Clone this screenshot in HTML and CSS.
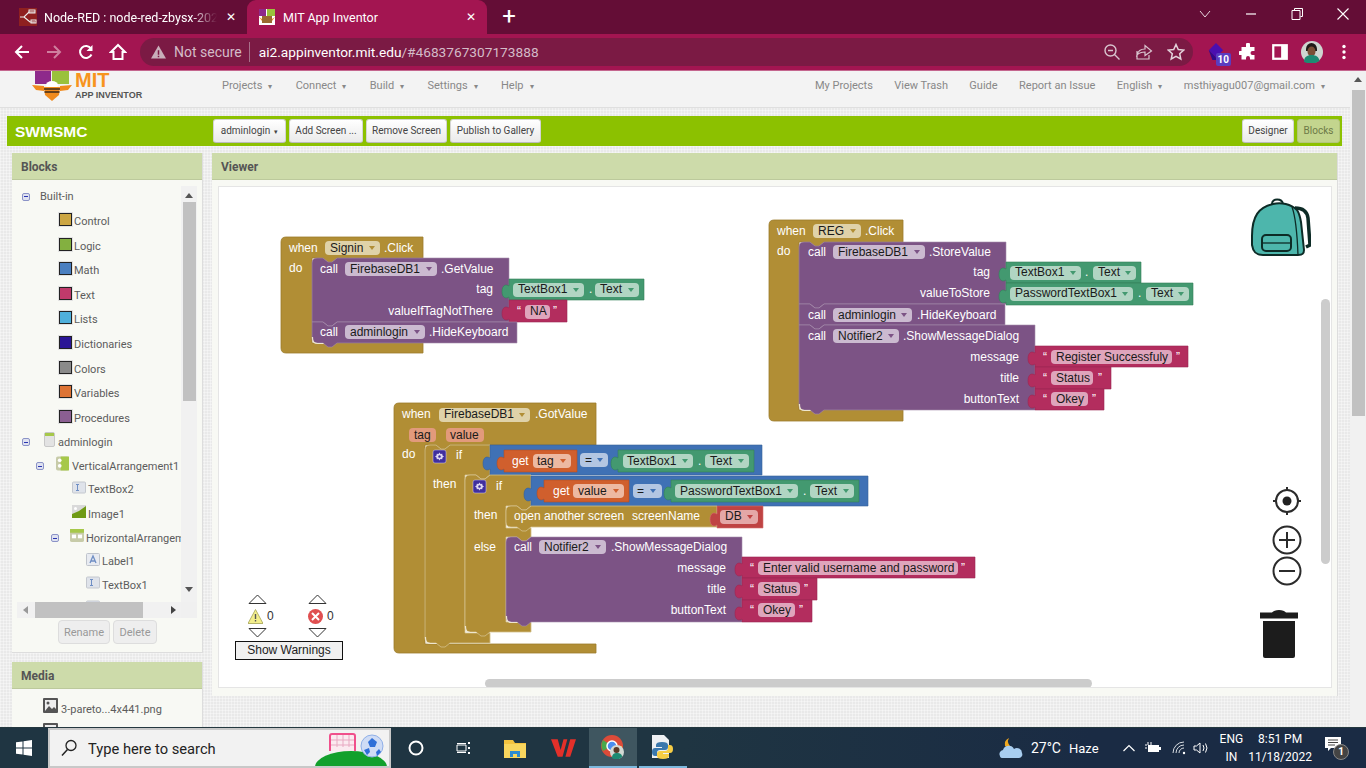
FILE: index.html
```html
<!DOCTYPE html>
<html lang="en">
<head>
<meta charset="utf-8">
<title>MIT App Inventor</title>
<link rel="stylesheet" href="styles.css">
</head>
<body>
<div class="tabstrip">
  <div class="tab inactive">
    <svg class="fav" viewBox="0 0 18 18"><rect width="18" height="18" fill="#8f2020"/><path d="M1 9h4l5-5h6M5 9l6 5h5" fill="none" stroke="#eee" stroke-width="1.2"/><rect x="10" y="2" width="6" height="3" fill="none" stroke="#eee"/><rect x="12" y="12" width="5" height="3" fill="none" stroke="#eee"/></svg>
    <span class="tabtitle fade">Node-RED : node-red-zbysx-2022</span>
    <span class="tabx">✕</span>
  </div>
  <div class="tab active">
    <svg class="fav" viewBox="0 0 16 16"><rect width="16" height="16" fill="#fff"/><rect width="7" height="7" fill="#8e2a8b"/><rect x="8" width="8" height="7" fill="#9ac13c"/><rect x="3" y="7" width="10" height="7" fill="#9a6a30"/><path d="M0 8l3 2v2zM16 8l-3 2v2z" fill="#f08a1d"/></svg>
    <span class="tabtitle">MIT App Inventor</span>
    <span class="tabx">✕</span>
  </div>
  <span class="newtab">+</span>
  <div class="winctl">
    <svg viewBox="0 0 14 14"><path d="M2 4l5 6 5-6" fill="none" stroke="#e8d5de"/></svg>
    <svg viewBox="0 0 14 14"><path d="M2 7h10" stroke="#fff" stroke-width="1.2"/></svg>
    <svg viewBox="0 0 14 14"><path d="M4.500 3V1.500h8v8H10.500M2 3.500h8v9H2z" fill="none" stroke="#fff"/></svg>
    <svg viewBox="0 0 14 14"><path d="M1.500 1.500l11 11M12.500 1.500l-11 11" stroke="#fff" stroke-width="1.1"/></svg>
  </div>
</div>
<div class="toolbar">
  <span class="tbtn"><svg viewBox="0 0 18 18"><path d="M16 9H3M9 3L3 9l6 6" fill="none" stroke="#fff" stroke-width="2"/></svg></span>
  <span class="tbtn"><svg viewBox="0 0 18 18"><path d="M2 9h13M9 3l6 6-6 6" fill="none" stroke="#cf7f9f" stroke-width="2"/></svg></span>
  <span class="tbtn"><svg viewBox="0 0 18 18"><path d="M14.500 11.500A6 6 0 1 1 14 5.500" fill="none" stroke="#fff" stroke-width="2"/><path d="M15.500 2v6h-6z" fill="#fff"/></svg></span>
  <span class="tbtn"><svg viewBox="0 0 18 18"><path d="M9 2L2 9h2.500v7h9V9H16z" fill="none" stroke="#fff" stroke-width="2"/></svg></span>
  <div class="omni">
    <svg class="warnicon" viewBox="0 0 16 14"><path d="M8 0l8 14H0z" fill="#c9aeba"/><path d="M7.200 5h1.600v5H7.200zM7.200 11h1.600v1.600H7.200z" fill="#7b1a44"/></svg>
    <span class="notsecure">Not secure</span>
    <span class="omnisep"></span>
    <span class="url">ai2.appinventor.mit.edu<span class="urldim">/#4683767307173888</span></span>
    <span class="omniicons">
      <svg viewBox="0 0 18 18"><circle cx="7.500" cy="7.500" r="5.500" fill="none" stroke="#d8c4ce" stroke-width="1.400"/><path d="M11.500 11.500l5 5M5 7.500h5" stroke="#d8c4ce" stroke-width="1.400"/></svg>
      <svg viewBox="0 0 18 18"><path d="M2 8v8h12v-4M2 12c1-4 4-6 8-6V2.500L16.500 8 10 12.500V9c-3 0-6 1-8 3z" fill="none" stroke="#d8c4ce" stroke-width="1.200"/></svg>
      <svg viewBox="0 0 18 18"><path d="M9 1.500l2.300 5 5.400.6-4 3.600 1.100 5.300L9 13.300 4.200 16l1.100-5.300-4-3.600 5.400-.6z" fill="none" stroke="#e3d2da" stroke-width="1.500"/></svg>
    </span>
  </div>
  <span class="tbtn ext"><svg viewBox="0 0 20 20"><path d="M10 0l8 8-8 8-8-8z" fill="#4a0fb0"/><path d="M2 8l8 8v3H6z" fill="#2f0a8a"/></svg><span class="badge">10</span></span>
  <span class="tbtn"><svg viewBox="0 0 18 18"><path d="M7 1.500a2 2 0 0 1 4 0V4h4.500v4h-2a2 2 0 0 0 0 4h2v4.500H11v-1.500a2 2 0 0 0-4 0v1.500H2.500V12H1a2 2 0 0 1 0-4h1.500V4H7z" fill="#fff"/></svg></span>
  <span class="tbtn"><svg viewBox="0 0 16 16"><path d="M1 1h14v14H1z" fill="#fff"/><path d="M3 3h6v10H3z" fill="#a31551"/></svg></span>
  <span class="tbtn"><svg class="avatar" viewBox="0 0 22 22"><circle cx="11" cy="11" r="11" fill="#cfd5d0"/><path d="M5 8a5.500 6 0 0 1 11 0v2H5z" fill="#1f1a18"/><ellipse cx="10.500" cy="10.500" rx="4" ry="5" fill="#7a4f35"/><path d="M3 21c0-5 3-7 7.500-7s7.500 2 8 6l-4 2H6z" fill="#1d8a72"/></svg></span>
  <span class="tbtn"><svg viewBox="0 0 18 18"><circle cx="9" cy="3.500" r="1.700" fill="#fff"/><circle cx="9" cy="9" r="1.700" fill="#fff"/><circle cx="9" cy="14.500" r="1.700" fill="#fff"/></svg></span>
</div>
<div class="page">
  <div class="app">
    <header class="topbar">
      <div class="logo">
        <svg class="bee" viewBox="0 0 40 30"><rect x="3" y="0" width="16" height="13" fill="#8e2a8b"/><rect x="20" y="0" width="17" height="13" fill="#9ac13c"/><ellipse cx="20" cy="14" rx="6" ry="4" fill="#fff"/><path d="M0 14l12 1v5l-8-1zM40 14l-12 1v5l8-1z" fill="#f08a1d"/><path d="M12 16h16l-1 8-7 6-7-6z" fill="#f08a1d"/><path d="M12 18h16M12.500 21h15" stroke="#3b2a1a" stroke-width="1.600"/></svg>
        <div class="logotext"><span class="mit">MIT</span><span class="appinv">APP INVENTOR</span></div>
      </div>
      <nav class="menu left">
        <span>Projects<i>▾</i></span><span>Connect<i>▾</i></span><span>Build<i>▾</i></span><span>Settings<i>▾</i></span><span>Help<i>▾</i></span>
      </nav>
      <nav class="menu right">
        <span>My Projects</span><span>View Trash</span><span>Guide</span><span>Report an Issue</span><span>English<i>▾</i></span><span>msthiyagu007@gmail.com<i>▾</i></span>
      </nav>
    </header>
    <div class="greenbar">
      <span class="projname">SWMSMC</span>
      <div class="gbtns">
        <button class="gbtn w1">adminlogin<i>▾</i></button>
        <button class="gbtn w2">Add Screen ...</button>
        <button class="gbtn w3">Remove Screen</button>
        <button class="gbtn w4">Publish to Gallery</button>
      </div>
      <div class="gbtns end">
        <button class="gbtn w5">Designer</button>
        <button class="gbtn w6 on">Blocks</button>
      </div>
    </div>
    <div class="content">
      <aside class="sidecol">
        <section class="panel blockspanel">
          <h2 class="ptitle">Blocks</h2>
          <div class="treewrap">
            <div class="tree">
              <div class="row r0 first"><span class="tog"></span><span class="rlabel builtin">Built-in</span></div>
              <div class="row cat"><span class="sw c1"></span>Control</div>
              <div class="row cat"><span class="sw c2"></span>Logic</div>
              <div class="row cat"><span class="sw c3"></span>Math</div>
              <div class="row cat"><span class="sw c4"></span>Text</div>
              <div class="row cat"><span class="sw c5"></span>Lists</div>
              <div class="row cat"><span class="sw c6"></span>Dictionaries</div>
              <div class="row cat"><span class="sw c7"></span>Colors</div>
              <div class="row cat"><span class="sw c8"></span>Variables</div>
              <div class="row cat"><span class="sw c9"></span>Procedures</div>
              <div class="row comp r0"><span class="tog"></span><svg class="cico screen" viewBox="0 0 11 15"><rect x=".5" y=".5" width="10" height="14" rx="1.500" fill="#e3e3e3" stroke="#c8c8c8"/><rect x="1" y="1" width="9" height="3" fill="#a6c84a"/></svg>adminlogin</div>
              <div class="row comp l1"><span class="tog"></span><svg class="cico" viewBox="0 0 14 15"><rect width="14" height="15" rx="2" fill="#c7cba8"/><rect x="5" width="9" height="15" fill="#a6c84a"/><circle cx="4" cy="4" r="2" fill="#fff"/><circle cx="4" cy="10" r="2" fill="#fff"/></svg>VerticalArrangement1</div>
              <div class="row comp l2"><svg class="cico wide" viewBox="0 0 14 12"><rect x=".5" y=".5" width="13" height="11" rx="1" fill="#dfe3ea" stroke="#c4c8cf"/><path d="M4 3h3M5.500 3v6M4 9h3" stroke="#6f8fc4"/></svg>TextBox2</div>
              <div class="row comp l2"><svg class="cico wide" viewBox="0 0 14 13"><rect width="14" height="13" fill="#d9d9d9"/><path d="M0 13V9l7-3 7-5v12z" fill="#6f9a14"/><circle cx="3.500" cy="3.500" r="1.500" fill="#fff"/></svg>Image1</div>
              <div class="row comp l3"><span class="tog"></span><svg class="cico wide" viewBox="0 0 15 14"><rect width="15" height="14" rx="2" fill="#c7cba8"/><rect width="15" height="4" fill="#a6c84a"/><rect x="2" y="6" width="4.500" height="4" fill="#fff"/><rect x="8.500" y="6" width="4.500" height="4" fill="#fff"/></svg>HorizontalArrangement1</div>
              <div class="row comp l4"><svg class="cico wide" viewBox="0 0 14 13"><rect x=".5" y=".5" width="13" height="12" rx="1" fill="#e8ebf1" stroke="#bfc4cc"/><path d="M4 10l3-7 3 7M5 8h4" fill="none" stroke="#6f8fc4" stroke-width="1.300"/></svg>Label1</div>
              <div class="row comp l4"><svg class="cico wide" viewBox="0 0 14 12"><rect x=".5" y=".5" width="13" height="11" rx="1" fill="#dfe3ea" stroke="#c4c8cf"/><path d="M4 3h3M5.500 3v6M4 9h3" stroke="#6f8fc4"/></svg>TextBox1</div>
              <div class="row comp l4"><svg class="cico wide" viewBox="0 0 14 12"><rect x=".5" y=".5" width="13" height="11" rx="1" fill="#dfe3ea" stroke="#c4c8cf"/></svg></div>
            </div>
            <div class="vscroll"><span class="arr up"></span><span class="vthumb"></span><span class="arr down"></span></div>
            <div class="hscroll"><span class="arr lft"></span><span class="hthumb"></span><span class="arr rgt"></span></div>
            <div class="corner"></div>
          </div>
          <div class="treebtns"><button class="dis b1">Rename</button><button class="dis b2">Delete</button></div>
        </section>
        <section class="panel mediapanel">
          <h2 class="ptitle">Media</h2>
          <div class="mediarow"><svg class="mico" viewBox="0 0 15 15"><rect width="15" height="15" rx="1" fill="#555"/><rect x="2" y="2" width="11" height="11" fill="#eee"/><path d="M2 13l4-5 3 3 2-2 2 2v2z" fill="#555"/><circle cx="5" cy="5" r="1.500" fill="#555"/></svg>3-pareto...4x441.png</div>
          <div class="mediarow"><svg class="mico" viewBox="0 0 15 15"><rect width="15" height="15" rx="1" fill="#555"/><rect x="2" y="2" width="11" height="11" fill="#eee"/></svg></div>
        </section>
      </aside>
      <section class="panel viewer">
        <h2 class="ptitle">Viewer</h2>
        <div class="viewerbody">
          <div class="workspace">
            <svg class="blocks" viewBox="218 187 1112 500" width="1112" height="500">
              <!-- Signin click -->
              <path class="ctl" d="M286 237H423V258H337l-5 4h-4l-5-4H312V343H423V353H286Q281 353 281 348V242Q281 237 286 237z"/>
              <text class="w" x="289" y="252">when</text>
              <rect class="pc" x="325" y="241" width="55" height="14" rx="4"/><text class="k" x="330" y="252">Signin</text><path class="ac" d="M369 246h6l-3 4z"/>
              <text class="w" x="384" y="252">.Click</text>
              <text class="w" x="289" y="272">do</text>
              <path class="proc" d="M317 258h6l5 4h4l5-4H509V322H337l-5 4h-4l-5-4H312V263Q312 258 317 258z"/>
              <text class="w" x="320" y="273">call</text>
              <rect class="pp" x="345" y="262" width="92" height="14" rx="4"/><text class="k" x="350" y="273">FirebaseDB1</text><path class="ap" d="M426 267h6l-3 4z"/>
              <text class="w" x="441" y="273">.GetValue</text>
              <text class="w e" x="493" y="293">tag</text>
              <text class="w e" x="493" y="315">valueIfTagNotThere</text>
              <path class="cmp" d="M509 279H644V300H509V297c-3 2-7 1-7-5.500s4-7.500 7-5.500z"/>
              <rect class="pg" x="513" y="283" width="71" height="14" rx="4"/><text class="k" x="518" y="293">TextBox1</text><path class="ag" d="M573 288h6l-3 4z"/>
              <text class="w" x="589" y="293">.</text>
              <rect class="pg" x="595" y="283" width="44" height="14" rx="4"/><text class="k" x="600" y="293">Text</text><path class="ag" d="M628 288h6l-3 4z"/>
              <path class="txt" d="M509 300H567V322H509V319c-3 2-7 1-7-5.500s4-7.500 7-5.500z"/>
              <text class="w q" x="517" y="315">“</text><rect class="pt" x="525" y="305" width="25" height="14" rx="4"/><text class="k" x="530" y="315">NA</text><text class="w q" x="553" y="315">”</text>
              <path class="proc" d="M312 322h11l5 4h4l5-4H517V343H337l-5 4h-4l-5-4H317Q312 343 312 338z"/>
              <text class="w" x="320" y="336">call</text>
              <rect class="pp" x="345" y="325" width="80" height="14" rx="4"/><text class="k" x="350" y="336">adminlogin</text><path class="ap" d="M414 330h6l-3 4z"/>
              <text class="w" x="429" y="336">.HideKeyboard</text>
              <path class="hl" d="M312.500 337v1q0 5.500 5 5.500h6"/>

              <!-- REG click -->
              <path class="ctl" d="M774 220H903V242H824l-5 4h-4l-5-4H799V410H903V421H774Q769 421 769 416V225Q769 220 774 220z"/>
              <text class="w" x="777" y="235">when</text>
              <rect class="pc" x="813" y="224" width="48" height="14" rx="4"/><text class="k" x="818" y="235">REG</text><path class="ac" d="M850 229h6l-3 4z"/>
              <text class="w" x="865" y="235">.Click</text>
              <text class="w" x="777" y="255">do</text>
              <path class="proc" d="M804 242h6l5 4h4l5-4H1006V304H824l-5 4h-4l-5-4H799V247Q799 242 804 242z"/>
              <text class="w" x="808" y="256">call</text>
              <rect class="pp" x="833" y="245" width="92" height="14" rx="4"/><text class="k" x="838" y="256">FirebaseDB1</text><path class="ap" d="M914 250h6l-3 4z"/>
              <text class="w" x="929" y="256">.StoreValue</text>
              <text class="w e" x="990" y="276">tag</text>
              <text class="w e" x="990" y="297">valueToStore</text>
              <path class="cmp" d="M1006 262H1141V283H1006V280c-3 2-7 1-7-5.500s4-7.500 7-5.500z"/>
              <rect class="pg" x="1010" y="266" width="71" height="14" rx="4"/><text class="k" x="1015" y="276">TextBox1</text><path class="ag" d="M1070 271h6l-3 4z"/>
              <text class="w" x="1085" y="276">.</text>
              <rect class="pg" x="1093" y="266" width="43" height="14" rx="4"/><text class="k" x="1098" y="276">Text</text><path class="ag" d="M1125 271h6l-3 4z"/>
              <path class="cmp" d="M1006 283H1193V305H1006V302c-3 2-7 1-7-5.500s4-7.500 7-5.500z"/>
              <rect class="pg" x="1010" y="287" width="123" height="14" rx="4"/><text class="k" x="1015" y="297">PasswordTextBox1</text><path class="ag" d="M1122 292h6l-3 4z"/>
              <text class="w" x="1138" y="297">.</text>
              <rect class="pg" x="1146" y="287" width="43" height="14" rx="4"/><text class="k" x="1151" y="297">Text</text><path class="ag" d="M1178 292h6l-3 4z"/>
              <path class="proc" d="M799 304h11l5 4h4l5-4H1005V325H824l-5 4h-4l-5-4H799z"/>
              <text class="w" x="808" y="319">call</text>
              <rect class="pp" x="833" y="308" width="79" height="14" rx="4"/><text class="k" x="838" y="319">adminlogin</text><path class="ap" d="M901 313h6l-3 4z"/>
              <text class="w" x="917" y="319">.HideKeyboard</text>
              <path class="proc" d="M799 325h11l5 4h4l5-4H1035V410H824l-5 4h-4l-5-4H804Q799 410 799 405z"/>
              <text class="w" x="808" y="340">call</text>
              <rect class="pp" x="833" y="329" width="66" height="14" rx="4"/><text class="k" x="838" y="340">Notifier2</text><path class="ap" d="M888 334h6l-3 4z"/>
              <text class="w" x="903" y="340">.ShowMessageDialog</text>
              <text class="w e" x="1019" y="361">message</text>
              <text class="w e" x="1019" y="382">title</text>
              <text class="w e" x="1019" y="403">buttonText</text>
              <path class="txt" d="M1035 346H1188V367H1035V364c-3 2-7 1-7-5.500s4-7.500 7-5.500z"/>
              <text class="w q" x="1043" y="361">“</text><rect class="pt" x="1051" y="350" width="121" height="14" rx="4"/><text class="k" x="1056" y="361">Register Successfuly</text><text class="w q" x="1176" y="361">”</text>
              <path class="txt" d="M1035 367H1111V389H1035V386c-3 2-7 1-7-5.500s4-7.500 7-5.500z"/>
              <text class="w q" x="1043" y="382">“</text><rect class="pt" x="1051" y="371" width="42" height="14" rx="4"/><text class="k" x="1056" y="382">Status</text><text class="w q" x="1098" y="382">”</text>
              <path class="txt" d="M1035 389H1104V410H1035V407c-3 2-7 1-7-5.500s4-7.500 7-5.500z"/>
              <text class="w q" x="1043" y="403">“</text><rect class="pt" x="1051" y="392" width="37" height="14" rx="4"/><text class="k" x="1056" y="403">Okey</text><text class="w q" x="1092" y="403">”</text>
              <path class="hl" d="M799.500 404v1q0 5.500 5 5.500h6"/>

              <!-- GotValue -->
              <path class="ctl" d="M399 403H596V445H450l-5 4h-4l-5-4H425V644H596V653H399Q394 653 394 648V408Q394 403 399 403z"/>
              <text class="w" x="402" y="418">when</text>
              <rect class="pc" x="439" y="408" width="91" height="14" rx="4"/><text class="k" x="444" y="418">FirebaseDB1</text><path class="ac" d="M519 413h6l-3 4z"/>
              <text class="w" x="535" y="418">.GotValue</text>
              <rect class="pe" x="409" y="428" width="27" height="14" rx="4"/><text class="k" x="414" y="439">tag</text>
              <rect class="pe" x="446" y="428" width="38" height="14" rx="4"/><text class="k" x="450" y="439">value</text>
              <text class="w" x="402" y="458">do</text>
              <path class="ctl lite" d="M430 445h6l5 4h4l5-4H490V475l-5 4h-4l-5-4H465V633H490V643H450l-5 4h-4l-5-4H430Q425 643 425 638V450Q425 445 430 445z"/>
              <rect class="gearbg" x="433" y="450" width="13" height="13" rx="2"/><path class="gear" d="M439.500 452.500l1 1.500 1.700-.3.300 1.700 1.500 1.100-1.500 1.100-.3 1.700-1.700-.3-1 1.500-1-1.500-1.700.3-.3-1.700-1.500-1.100 1.500-1.100.3-1.700 1.700.3z"/><circle class="gearbg" cx="439.500" cy="456.500" r="1.500"/>
              <text class="w" x="456" y="459">if</text>
              <text class="w" x="433" y="488">then</text>
              <path class="blu" d="M490 445H762V475H490V469c-3 2-7 1-7-5.500s4-7.500 7-5.500z"/>
              <path class="var" d="M504 450H577V472H504V469c-3 2-7 1-7-5.500s4-7.500 7-5.500z"/>
              <text class="w" x="512" y="465">get</text>
              <rect class="pv" x="533" y="454" width="38" height="14" rx="4"/><text class="k" x="537" y="465">tag</text><path class="av" d="M560 459h6l-3 4z"/>
              <rect class="pb" x="580" y="453" width="28" height="14" rx="4"/><text class="k" x="585" y="464">=</text><path class="ab" d="M597 458h6l-3 4z"/>
              <path class="cmp" d="M618 450H754V472H618V469c-3 2-7 1-7-5.500s4-7.500 7-5.500z"/>
              <rect class="pg" x="623" y="454" width="70" height="14" rx="4"/><text class="k" x="627" y="465">TextBox1</text><path class="ag" d="M682 459h6l-3 4z"/>
              <text class="w" x="698" y="465">.</text>
              <rect class="pg" x="705" y="454" width="44" height="14" rx="4"/><text class="k" x="710" y="465">Text</text><path class="ag" d="M738 459h6l-3 4z"/>
              <path class="ctl lite" d="M470 475h6l5 4h4l5-4H531V506l-5 4h-4l-5-4H506V528H531V537l-5 4h-4l-5-4H506V622H531V632H490l-5 4h-4l-5-4H470Q465 632 465 627V480Q465 475 470 475z"/>
              <rect class="gearbg" x="473" y="480" width="13" height="13" rx="2"/><path class="gear" d="M479.500 482.500l1 1.500 1.700-.3.300 1.700 1.500 1.100-1.500 1.100-.3 1.700-1.700-.3-1 1.500-1-1.500-1.700.3-.3-1.700-1.500-1.100 1.500-1.100.3-1.700 1.700.3z"/><circle class="gearbg" cx="479.500" cy="486.500" r="1.500"/>
              <text class="w" x="496" y="490">if</text>
              <text class="w" x="474" y="519">then</text>
              <text class="w" x="474" y="551">else</text>
              <path class="blu" d="M531 476H868V506H531V500c-3 2-7 1-7-5.500s4-7.500 7-5.500z"/>
              <path class="var" d="M544 480H629V502H544V499c-3 2-7 1-7-5.500s4-7.500 7-5.500z"/>
              <text class="w" x="553" y="495">get</text>
              <rect class="pv" x="573" y="484" width="51" height="14" rx="4"/><text class="k" x="578" y="495">value</text><path class="av" d="M613 489h6l-3 4z"/>
              <rect class="pb" x="633" y="484" width="29" height="14" rx="4"/><text class="k" x="637" y="495">=</text><path class="ab" d="M650 489h6l-3 4z"/>
              <path class="cmp" d="M671 480H859V502H671V499c-3 2-7 1-7-5.500s4-7.500 7-5.500z"/>
              <rect class="pg" x="675" y="484" width="123" height="14" rx="4"/><text class="k" x="680" y="495">PasswordTextBox1</text><path class="ag" d="M787 489h6l-3 4z"/>
              <text class="w" x="803" y="495">.</text>
              <rect class="pg" x="810" y="484" width="44" height="14" rx="4"/><text class="k" x="815" y="495">Text</text><path class="ag" d="M843 489h6l-3 4z"/>
              <path class="ctl lite" d="M511 506h6l5 4h4l5-4H717V527H531l-5 4h-4l-5-4H511Q506 527 506 522V511Q506 506 511 506z"/>
              <text class="w" x="514" y="520">open another screen</text>
              <text class="w" x="632" y="520">screenName</text>
              <path class="hel" d="M717 506H763V528H717V525c-3 2-7 1-7-5.500s4-7.500 7-5.500z"/>
              <rect class="pd" x="720" y="510" width="38" height="14" rx="4"/><text class="k" x="725" y="520">DB</text><path class="ad" d="M747 515h6l-3 4z"/>
              <path class="proc" d="M511 537h6l5 4h4l5-4H742V622H531l-5 4h-4l-5-4H511Q506 622 506 617V542Q506 537 511 537z"/>
              <text class="w" x="514" y="551">call</text>
              <rect class="pp" x="539" y="540" width="67" height="14" rx="4"/><text class="k" x="544" y="551">Notifier2</text><path class="ap" d="M595 545h6l-3 4z"/>
              <text class="w" x="611" y="551">.ShowMessageDialog</text>
              <text class="w e" x="726" y="572">message</text>
              <text class="w e" x="726" y="593">title</text>
              <text class="w e" x="726" y="614">buttonText</text>
              <path class="txt" d="M742 557H975V578H742V575c-3 2-7 1-7-5.500s4-7.500 7-5.500z"/>
              <text class="w q" x="750" y="572">“</text><rect class="pt" x="758" y="561" width="200" height="14" rx="4"/><text class="k" x="763" y="572">Enter valid username and password</text><text class="w q" x="961" y="572">”</text>
              <path class="txt" d="M742 578H817V600H742V597c-3 2-7 1-7-5.500s4-7.500 7-5.500z"/>
              <text class="w q" x="750" y="593">“</text><rect class="pt" x="758" y="582" width="42" height="14" rx="4"/><text class="k" x="763" y="593">Status</text><text class="w q" x="804" y="593">”</text>
              <path class="txt" d="M742 600H812V622H742V619c-3 2-7 1-7-5.500s4-7.500 7-5.500z"/>
              <text class="w q" x="750" y="614">“</text><rect class="pt" x="758" y="603" width="37" height="14" rx="4"/><text class="k" x="763" y="614">Okey</text><text class="w q" x="799" y="614">”</text>
              <path class="hl" d="M506.500 616v1q0 5.500 5 5.500h6"/>
              <path class="hl" d="M465.500 626v1q0 5.500 5 5.500h6"/>
              <path class="hl" d="M425.500 637v1q0 5.500 5 5.500h6"/>
            </svg>

            <svg class="backpack" viewBox="0 0 60 60">
              <path d="M44 10c8 0 12 3 13 10l2 27-4 2" fill="#fff" stroke="#0d2b26" stroke-width="3.500"/>
              <path d="M21 6c0-6 10-6 11 0" fill="none" stroke="#0d2b26" stroke-width="2"/>
              <path d="M1 38C1 18 8 9 22 6c8-2 18 0 24 6 2 3 3 6 4 12l3 28c0 4-2 5-6 5H12C5 57 2 54 1 47z" fill="#4db6ac" stroke="#0d2b26" stroke-width="2"/>
              <path d="M41 9c3 8 5 22 6 48" fill="none" stroke="#0d2b26" stroke-width="1.300"/>
              <rect x="11" y="37" width="29" height="16" rx="4" fill="#4db6ac" stroke="#0d2b26" stroke-width="2"/>
              <path d="M11 45h29" stroke="#0d2b26" stroke-width="1.300"/>
            </svg>
            <svg class="wsicon target" viewBox="0 0 30 30"><circle cx="15" cy="15" r="11" fill="#fff" stroke="#2b2b2b" stroke-width="2"/><circle cx="15" cy="15" r="4.500" fill="#222"/><path d="M15 1v4M15 25v4M1 15h4M25 15h4" stroke="#2b2b2b" stroke-width="2"/></svg>
            <svg class="wsicon plus" viewBox="0 0 30 30"><circle cx="15" cy="15" r="13.500" fill="#fff" stroke="#2b2b2b" stroke-width="2"/><path d="M15 7v16M7 15h16" stroke="#2b2b2b" stroke-width="2"/></svg>
            <svg class="wsicon minus" viewBox="0 0 30 30"><circle cx="15" cy="15" r="13.500" fill="#fff" stroke="#2b2b2b" stroke-width="2"/><path d="M7 15h16" stroke="#2b2b2b" stroke-width="2"/></svg>
            <svg class="trash" viewBox="0 0 38 49"><path d="M0 2.500h12q2-2.500 7-2.500t7 2.500h12v6H0z" fill="#1c1c1c"/><path d="M3 11h32v35q0 2-2 2H5q-2 0-2-2z" fill="#1c1c1c"/></svg>
            <span class="wscroll v"></span>
            <span class="wscroll h"></span>

            <div class="warnbox">
              <div class="wcols">
                <div class="wcol">
                  <svg class="tri" viewBox="0 0 19 10"><path d="M1 9.500L9.500 1 18 9.500z" fill="#fff" stroke="#333"/></svg>
                  <div class="wcount"><svg viewBox="0 0 15 15"><path d="M7.500 .5L15 14.500H0z" fill="#f3ee8c" stroke="#b5b36a"/><path d="M6.800 5h1.400v5H6.800zM6.800 11h1.400v1.400H6.800z" fill="#555"/></svg><span>0</span></div>
                  <svg class="tri" viewBox="0 0 19 10"><path d="M1 .5L9.500 9 18 .5z" fill="#fff" stroke="#333"/></svg>
                </div>
                <div class="wcol">
                  <svg class="tri" viewBox="0 0 19 10"><path d="M1 9.500L9.500 1 18 9.500z" fill="#fff" stroke="#333"/></svg>
                  <div class="wcount"><svg viewBox="0 0 15 15"><circle cx="7.500" cy="7.500" r="7.500" fill="#e04f50"/><path d="M4 4l7 7M11 4l-7 7" stroke="#fff" stroke-width="2"/></svg><span>0</span></div>
                  <svg class="tri" viewBox="0 0 19 10"><path d="M1 .5L9.500 9 18 .5z" fill="#fff" stroke="#333"/></svg>
                </div>
              </div>
              <div class="showwarn">Show Warnings</div>
            </div>
          </div>
        </div>
      </section>
    </div>
  </div>
  <div class="pagescroll"><span class="arr up"></span><span class="pthumb"></span></div>
</div>
<footer class="taskbar">
  <span class="start"><svg viewBox="0 0 16 16"><path d="M0 2.300L6.500 1.400V7.500H0zM7.500 1.200L16 0V7.500H7.500zM0 8.500H6.500V14.600L0 13.700zM7.500 8.500H16V16L7.500 14.800z" fill="#fff"/></svg></span>
  <div class="search">
    <svg class="mag" viewBox="0 0 16 18"><circle cx="10" cy="6.500" r="5" fill="none" stroke="#222" stroke-width="1.300"/><path d="M6.500 10.500L1 16.500" stroke="#222" stroke-width="1.500"/></svg>
    <span class="stext">Type here to search</span>
    <svg class="doodle" viewBox="0 0 78 39"><ellipse cx="40" cy="38" rx="36" ry="16" fill="#12a02c"/><path d="M19 22V7q0-2 2-2h21q2 0 2 2v15" fill="#fbeaf0" stroke="#f0508c" stroke-width="2"/><path d="M26 6v12M32 6v12M38 6v12M20 11h23M20 16h23" stroke="#e8a9c2"/><circle cx="61" cy="17" r="11" fill="#cfdcf5"/><circle cx="61" cy="17" r="11" fill="none" stroke="#8fb0e8"/><path d="M61 9l-4 4 2 5h5l2-5zM53 21l3 5 3-3-1-4zM68 20l-3 3 1 4 4-4z" fill="#2f6fd8"/></svg>
  </div>
  <span class="tk cortana"><svg viewBox="0 0 16 16"><circle cx="8" cy="8" r="6.500" fill="none" stroke="#fff" stroke-width="2"/></svg></span>
  <span class="tk taskview"><svg viewBox="0 0 16 16"><path d="M1 3.500h9M1 12.500h9M1 5h9v6H1z" fill="none" stroke="#fff"/><path d="M13 2v2M13 7v2M13 12v2" stroke="#fff" stroke-width="2"/></svg></span>
  <span class="tk files"><svg viewBox="0 0 22 22"><path d="M0 3h9l2 3h11v15H0z" fill="#f4c33f"/><rect y="7" width="22" height="14" fill="#f9d65e"/><path d="M6 20v-6h10v6h-3v-3H9v3z" fill="#2c8bd0"/></svg></span>
  <span class="tk wps"><svg viewBox="0 0 26 20"><path d="M0 1h7l3 11 3-11h4L12 19H7zM15 19L20 1h6l-6 18z" fill="#e3302a"/></svg></span>
  <span class="tk chrome"><svg viewBox="0 0 26 26"><circle cx="12" cy="12" r="11" fill="#dd4b39"/><path d="M12 12L3 17A11 11 0 0 1 3 6z" fill="#4aa84c"/><path d="M12 12l10 0a11 11 0 0 1-10 11z" fill="#f5c33b"/><circle cx="12" cy="12" r="5" fill="#4a8df0" stroke="#fff" stroke-width="1.500"/><circle cx="17" cy="18" r="7" fill="#d4d9d4"/><circle cx="16.500" cy="16" r="3" fill="#5a3a28"/><path d="M12 24c0-4 2-5 5-5s5 1 5 4l-3 2h-5z" fill="#1d8a72"/></svg></span>
  <span class="tk py"><svg viewBox="0 0 26 26"><path d="M2 1h12l5 5v18H2z" fill="#eef0f3"/><path d="M12 8q-6 0-6 3v2h6v1H5q-3 0-3 4t3 4h2v-3q0-3 3-3h5q3 0 3-3v-2q0-3-6-3z" fill="#3b78ad"/><path d="M13 25q6 0 6-3v-2h-6v-1h7q3 0 3-4t-3-4h-2v3q0 3-3 3h-5q-3 0-3 3v2q0 3 6 3z" fill="#f7cd45"/></svg></span>
  <span class="tsp"></span>
  <div class="tray">
    <svg class="weather" viewBox="0 0 24 24"><path d="M10 2a6 6 0 0 0 3 9 6 6 0 0 1-7-1 7 7 0 0 1 4-8z" fill="#f0a81e"/><path d="M1 20a4 4 0 0 1 3-6 6 6 0 0 1 11-1 5 5 0 0 1 8 4 3.500 3.500 0 0 1-3 5H4q-3 0-3-2z" fill="#a8cdef"/></svg>
    <span class="temp">27°C</span><span class="haze">Haze</span>
    <svg class="caret" viewBox="0 0 12 8"><path d="M.5 7L6 1.500 11.500 7" fill="none" stroke="#fff" stroke-width="1.200"/></svg>
    <svg class="batt" viewBox="0 0 16 12"><path d="M0 3h2M0 6h2M3 0v3M6 0v3" stroke="#fff"/><rect x="3" y="3" width="11" height="7" fill="#fff"/><rect x="14" y="5" width="2" height="3" fill="#fff"/></svg>
    <svg class="wifi" viewBox="0 0 14 14"><path d="M1 12a11 11 0 0 1 11-11M4 12a8 8 0 0 1 8-8M7 12a5 5 0 0 1 5-5" fill="none" stroke="#d8dde2"/><circle cx="12" cy="12" r="1.200" fill="#fff"/></svg>
    <svg class="spk" viewBox="0 0 16 14"><path d="M1 5h2.500L7 2v10L3.500 9H1z" fill="none" stroke="#fff"/><path d="M10 4q2 3 0 6M12.500 2.500q3 4.500 0 9" fill="none" stroke="#fff"/></svg>
    <span class="lang"><span>ENG</span><span>IN</span></span>
    <span class="clock"><span>8:51 PM</span><span>11/18/2022</span></span>
    <span class="notif"><svg viewBox="0 0 16 16"><path d="M0 0h16v11H6l-3 3v-3H0z" fill="#fff"/><path d="M3 3h10M3 5.500h10M3 8h7" stroke="#444"/></svg><b class="nbadge">1</b></span>
  </div>
</footer>
</body>
</html>
```
FILE: styles.css
```css
* { box-sizing: border-box; }
html, body { margin: 0; padding: 0; height: 768px; overflow: hidden; }
body { display: flex; flex-direction: column; width: 1366px; font-family: "Liberation Sans", Arial, sans-serif; background: #e9e9e9; }
h2 { margin: 0; }
i { font-style: normal; }
svg { display: block; }

/* Browser chrome */
.tabstrip { height: 34px; background: #640d36; display: flex; align-items: stretch; flex: none; }
.tab { display: flex; align-items: center; font: 12.500px Roboto, sans-serif; color: #fff; }
.tab.inactive { width: 239px; margin-left: 8px; padding-left: 11px; padding-right: 9px; }
.tab.active { width: 240px; background: #a31551; border-radius: 9px 9px 0 0; padding-left: 12px; padding-right: 9px; }
.fav { width: 18px; height: 18px; flex: none; margin-right: 7px; }
.active .fav { width: 16px; height: 16px; margin-right: 8px; }
.tabtitle { flex: 1; overflow: hidden; white-space: nowrap; }
.tabtitle.fade { margin-right: 7px; -webkit-mask-image: linear-gradient(90deg, #000 85%, transparent); mask-image: linear-gradient(90deg, #000 85%, transparent); }
.tabx { font-size: 12px; width: 14px; flex: none; text-align: center; }
.newtab { width: 44px; text-align: center; color: #fff; font: 24px/33px Roboto, sans-serif; }
.winctl { margin-left: auto; display: flex; align-items: center; gap: 32px; padding-right: 16px; padding-bottom: 6px; }
.winctl svg { width: 14px; height: 14px; }

.toolbar { height: 36px; background: #a31551; display: flex; align-items: center; padding-left: 6px; flex: none; }
.tbtn { width: 32px; height: 28px; display: flex; align-items: center; justify-content: center; flex: none; }
.tbtn svg { width: 18px; height: 18px; }
.tbtn .avatar { width: 22px; height: 22px; }
.ext { position: relative; }
.badge { position: absolute; right: 1px; bottom: 0; background: #5b3cc0; color: #fff; font: bold 10px/13px Roboto, sans-serif; padding: 0 2px; border-radius: 2px; }
.omni { width: 1053px; margin-left: 6px; margin-right: 7px; height: 28px; border-radius: 14px; background: #7b1a44; display: flex; align-items: center; padding-left: 11px; font: 14px Roboto, sans-serif; }
.warnicon { width: 15px; height: 14px; margin-right: 8px; }
.notsecure { color: #d4bcc8; }
.omnisep { width: 1px; height: 20px; background: #a8708a; margin: 0 9px 0 7px; }
.url { color: #fff; font-size: 13.700px; }
.urldim { color: #d4bcc8; }
.omniicons { margin-left: auto; display: flex; gap: 14px; padding-right: 8px; }
.omniicons svg { width: 18px; height: 18px; }

/* Page */
.page { height: 657px; display: flex; flex: none; overflow: hidden; border-top: 1px solid #c4668e; }
.app { width: 1350px; background-color: #e9e9e9; background-image: linear-gradient(rgba(255,255,255,.35) 1px, transparent 1px), linear-gradient(90deg, rgba(255,255,255,.35) 1px, transparent 1px); background-size: 3px 3px; padding-bottom: 0; }
.pagescroll { width: 16px; background: #f1f1f1; display: flex; flex-direction: column; align-items: center; padding-top: 6px; }
.pthumb { width: 13px; height: 326px; background: #c1c1c1; margin-top: 8px; }
.arr { display: block; width: 0; height: 0; border: 4px solid transparent; }
.arr.up { border-top: 0; border-bottom: 5px solid #555; }
.arr.down { border-bottom: 0; border-top: 5px solid #555; }
.arr.lft { border-left: 0; border-right: 5px solid #999; }
.arr.rgt { border-right: 0; border-left: 5px solid #444; }

.topbar { height: 37px; background: #f3f3f3; border-bottom: 1px solid #dfdfdf; display: flex; align-items: flex-start; padding-left: 32px; }
.logo { width: 190px; height: 36px; display: flex; flex: none; overflow: hidden; }
.bee { width: 40px; height: 30px; flex: none; }
.logotext { margin-left: 3px; display: flex; flex-direction: column; }
.mit { font: bold 20px/20px "Liberation Sans", sans-serif; color: #f7941e; margin-top: -1px; }
.appinv { font: bold 9px/10px "Liberation Sans", sans-serif; color: #555; margin-top: 0; }
.menu { display: flex; font: 11px/14px Roboto, sans-serif; color: #888; padding-top: 8px; }
.menu.left { gap: 23.300px; }
.menu.right { margin-left: auto; gap: 21.400px; padding-right: 25px; }
.menu i { font-size: 8px; margin-left: 6px; }

.greenbar { height: 30px; margin: 8px 8px 0 7px; background: #8cc100; display: flex; align-items: center; padding-left: 8px; padding-right: 2px; }
.projname { width: 198px; color: #fff; font: bold 15.500px "Liberation Sans", sans-serif; padding-top: 2px; }
.gbtns { display: flex; gap: 3px; }
.gbtns.end { margin-left: auto; }
.gbtn { height: 24px; padding: 0 0 1px; border: 1px solid #d4d4d4; border-bottom-color: #bbb; border-radius: 3px; background: linear-gradient(#fff, #eaeaea); font: 10px Roboto, sans-serif; color: #444; white-space: nowrap; }
.gbtn i { font-size: 7px; margin-left: 4px; }
.gbtn.w1 { width: 73px; } .gbtn.w2 { width: 74px; } .gbtn.w3 { width: 81px; } .gbtn.w4 { width: 91px; } .gbtn.w5 { width: 52px; } .gbtn.w6 { width: 43px; }
.gbtn.on { background: #c3d58e; border-color: #b4c67f; color: #6d7a47; }

.content { display: flex; gap: 9px; margin-top: 7px; padding-left: 12px; align-items: flex-start; }
.sidecol { width: 191px; display: flex; flex-direction: column; gap: 9px; flex: none; }
.panel { background: #f8f9f4; border-right: 1px solid #ddd; }
.ptitle { height: 27px; background: #cddbaa; border-bottom: 1px solid #bcc99c; font: bold 12px/28px Roboto, sans-serif; color: #555; padding-left: 9px; }
.blockspanel { height: 500px; border-bottom: 1px solid #ddd; }
.mediapanel { height: 80px; overflow: hidden; }
.viewer { width: 1126px; height: 543px; padding-bottom: 0; }
.viewerbody { padding: 6px 6px 7px 6px; }

.treewrap { margin: 6px 6px 0 5px; width: 180px; height: 432px; display: grid; grid-template-columns: 164px 16px; grid-template-rows: 416px 16px; font: 11px Roboto, sans-serif; color: #5c5c5c; }
.tree { overflow: hidden; }
.row { display: flex; align-items: center; white-space: nowrap; height: 24.600px; }
.first { margin-top: -1.500px; height: 24.800px; }
.r0 { padding-left: 5px; }
.tog { width: 8px; height: 8px; border: 1px solid #8b93c7; background: #dfe2f0; border-radius: 2px; flex: none; position: relative; margin-right: 10px; }
.tog::after { content: ""; position: absolute; left: 1px; top: 2.500px; width: 4px; height: 1px; background: #2a35b0; }
.cat { padding-left: 42px; }
.sw { width: 13px; height: 13px; border: 1px solid #222; outline: 1px solid #e2e2e2; margin: -4px 2px 0 0; flex: none; }
.c1 { background: #cca642; } .c2 { background: #83b040; } .c3 { background: #4a7fc0; } .c4 { background: #c03a6b; } .c5 { background: #4fb0dc; } .c6 { background: #2a1596; } .c7 { background: #8a8a8a; } .c8 { background: #dd7334; } .c9 { background: #8b5f92; }
.comp { height: 23.600px; }
.cico { width: 13px; height: 15px; margin: -5px 3px 0 0; flex: none; }
.cico.wide { width: 14px; height: 13px; margin-right: 2px; }
.screen { margin-left: 10px; width: 11px; }
.r0.comp .tog { margin-right: 4px; }
.l1 { padding-left: 19px; }
.l1 .tog { margin-right: 12px; }
.l2 { padding-left: 55px; height: 24.300px; }
.l3 { padding-left: 34px; }
.l3 .tog { margin-right: 11px; }
.l4 { padding-left: 69px; }
.vscroll { background: #f1f1f1; grid-column: 2; grid-row: 1; display: flex; flex-direction: column; align-items: center; padding-top: 7px; }
.vthumb { width: 13px; height: 199px; background: #c1c1c1; margin: 4px 0 186px; }
.hscroll { background: #f1f1f1; grid-column: 1; grid-row: 2; display: flex; align-items: center; padding-left: 6px; }
.hthumb { width: 108px; height: 16px; background: #c1c1c1; margin: 0 28px 0 7px; }
.corner { background: #f0f0f0; }
.treebtns { display: flex; gap: 3px; margin: 2px 0 0 46px; }
.dis { height: 24px; border: 1px solid #ddd; border-radius: 4px; background: #eee; color: #999; font: 11px Roboto, sans-serif; padding: 0; }
.b1 { width: 52px; } .b2 { width: 44px; }
.mediarow { height: 25px; display: flex; align-items: center; padding: 15px 0 0 31px; font: 11px Roboto, sans-serif; color: #5c5c5c; }
.mico { width: 15px; height: 15px; margin: -7px 3px 0 0; flex: none; }

/* Workspace */
.workspace { position: relative; width: 1114px; height: 502px; background: #fff; border: 1px solid #e5e5e5; overflow: hidden; }
.blocks { position: absolute; left: -1px; top: 0; font: 12px "Liberation Sans", Arial, sans-serif; }
.blocks text { fill: #fff; white-space: pre; }
.blocks .k { fill: #1a1a1a; }
.blocks .e { text-anchor: end; }
.blocks .q { font-size: 12px; }
.ctl { fill: #b18e35; stroke: #9c7c2c; stroke-width: .8; }
.ctl.lite { stroke: #d3c08c; }
.proc { fill: #7c5385; stroke: #a68dab; stroke-width: .6; }
.cmp { fill: #439970; stroke: #338058; stroke-width: .6; }
.txt { fill: #b32d5e; stroke: #9c2750; stroke-width: .6; }
.blu { fill: #3f71b5; stroke: #356199; stroke-width: .6; }
.var { fill: #d05f2d; stroke: #ae4e24; stroke-width: .6; }
.hel { fill: #bf4343; stroke: #d56f6f; stroke-width: .6; }
.pc { fill: #dfd2a9; } .pp { fill: #cbbad0; } .pg { fill: #b1d5c3; } .pt { fill: #dfa5bc; } .pv { fill: #edb9a2; } .pe { fill: #e29a7c; } .pb { fill: #b3c6e2; } .pd { fill: #e4a7a7; }
.ac { fill: #b18e35; } .ap { fill: #7c5385; } .ag { fill: #439970; } .ab { fill: #3f71b5; } .av { fill: #d05f2d; } .ad { fill: #bf4343; }
.hl { fill: none; stroke: #eee6cf; stroke-width: 1.200; }
.gearbg { fill: #3f2f9e; stroke: #d6cdf0; stroke-width: .5; }
.gear { fill: #dcd7f2; }

.backpack { position: absolute; left: 1032px; top: 11px; width: 60px; height: 60px; }
.wsicon { position: absolute; left: 1053px; width: 30px; height: 30px; }
.target { top: 299px; }
.plus { top: 338px; }
.minus { top: 369px; }
.trash { position: absolute; left: 1041px; top: 423px; width: 38px; height: 49px; }
.wscroll { position: absolute; background: #ccc; border-radius: 5px; }
.wscroll.v { left: 1102px; top: 112px; width: 9px; height: 265px; }
.wscroll.h { left: 266px; top: 492px; width: 607px; height: 9px; }

.warnbox { position: absolute; left: 16px; top: 407px; width: 108px; font: 12px "Liberation Sans", sans-serif; color: #333; }
.wcols { display: flex; padding-left: 13px; gap: 41px; }
.wcol { display: flex; flex-direction: column; width: 19px; }
.tri { width: 19px; height: 10px; }
.wcount { display: flex; align-items: center; height: 24px; gap: 4px; white-space: nowrap; }
.wcount svg { width: 15px; height: 15px; flex: none; }
.showwarn { height: 19px; margin-top: 3px; border: 1px solid #111; border-left-width: 1.500px; border-right-width: 1.500px; background: #f0f0f0; text-align: center; line-height: 17px; color: #222; }

/* Taskbar */
.taskbar { height: 41px; flex: none; display: flex; align-items: stretch; background: linear-gradient(90deg, #1f3542 0, #1f3542 50%, #1a2b44 80%, #1a2b44 100%); border-top: 1px solid #24383f; margin-top: auto; }
.start { width: 48px; display: flex; align-items: center; justify-content: center; }
.start svg { width: 16px; height: 16px; }
.search { width: 343px; background: #f2f2f2; border: 2px solid #c8c8c8; display: flex; align-items: center; padding-left: 11px; overflow: hidden; }
.mag { width: 16px; height: 18px; flex: none; }
.stext { margin-left: 11px; font: 14.700px Roboto, sans-serif; color: #222; white-space: nowrap; flex: 1; padding-top: 1px; }
.doodle { width: 78px; height: 39px; flex: none; margin-right: 0; }
.tk { width: 48px; display: flex; align-items: center; justify-content: center; }
.tk svg { width: 16px; height: 16px; }
.cortana { margin-left: 1px; }
.files, .wps { padding-left: 6px; }
.files svg { width: 22px; height: 22px; }
.wps svg { width: 25px; height: 20px; }
.chrome { background: #3f5660; border-bottom: 2px solid #7cb8dd; margin-left: 5px; }
.chrome svg { width: 26px; height: 26px; }
.py { width: 48px; border-bottom: 2px solid #7cb8dd; margin-left: 2px; }
.py svg { width: 26px; height: 26px; }
.tsp { flex: 1; }
.tray { display: flex; align-items: center; color: #fff; font: 13px Roboto, sans-serif; padding-right: 16px; }
.weather { width: 24px; height: 24px; }
.temp { margin-left: 8px; font-size: 14px; }
.haze { margin-left: 8px; }
.caret { width: 12px; height: 8px; margin-left: 24px; }
.batt { width: 16px; height: 12px; margin-left: 10px; }
.wifi { width: 14px; height: 14px; margin-left: 11px; }
.spk { width: 16px; height: 14px; margin-left: 7px; }
.lang, .clock { display: flex; flex-direction: column; align-items: center; font-size: 12px; line-height: 18px; }
.lang { margin-left: 11px; }
.clock { margin-left: 5px; }
.notif { position: relative; margin-left: 13px; width: 25px; height: 24px; }
.notif svg { width: 16px; height: 16px; margin-top: 1px; }
.nbadge { position: absolute; left: 8px; top: 8px; width: 16px; height: 16px; border-radius: 8px; background: #444; border: 1px solid #888; color: #fff; font: bold 10px/14px Roboto, sans-serif; text-align: center; }
```
